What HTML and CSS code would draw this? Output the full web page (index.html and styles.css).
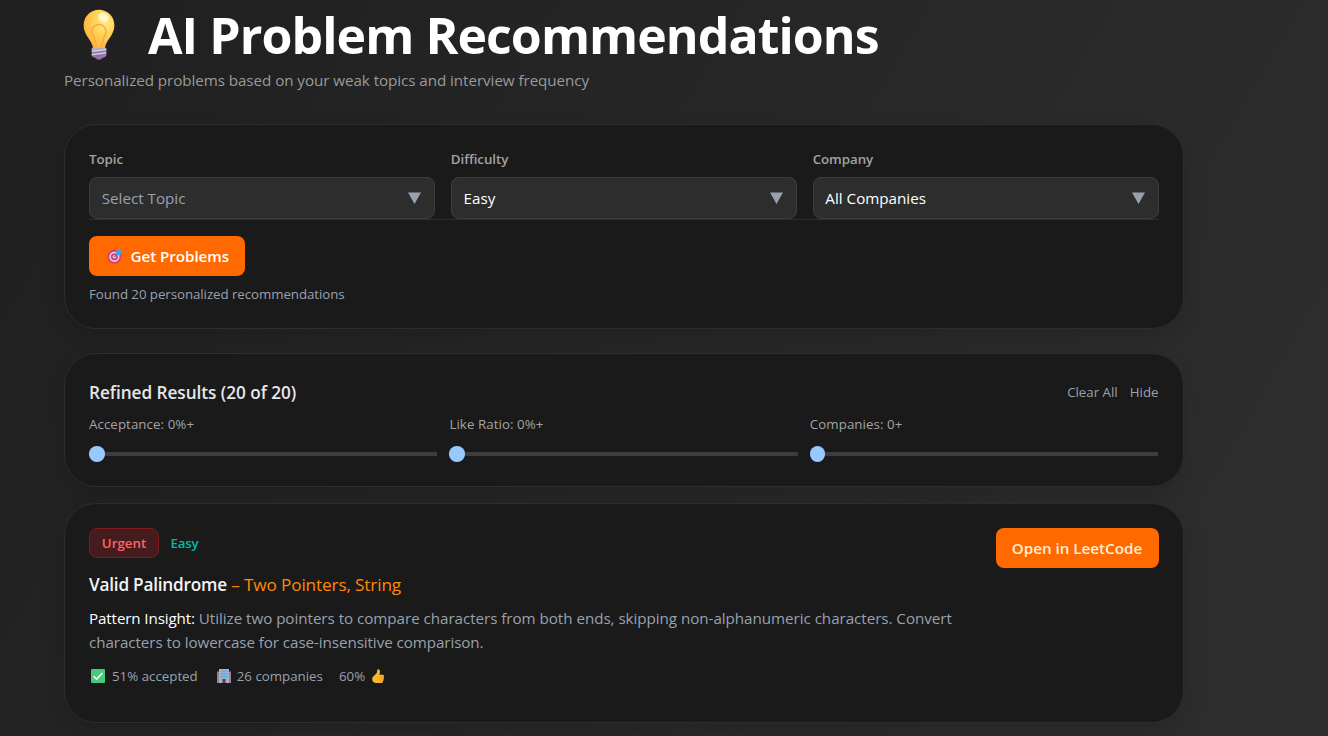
FILE: index.html
```html
<!DOCTYPE html>
<html lang="en">
<head>
<meta charset="utf-8">
<title>AI Problem Recommendations</title>
<link rel="stylesheet" href="styles.css">
</head>
<body>
<main class="page">
  <header class="header">
    <h1 class="title">
      <svg class="bulb" viewBox="0 0 32 51">
        <defs>
          <radialGradient id="glass" cx=".68" cy=".32" r=".75"><stop offset="0" stop-color="#ffec8c"/><stop offset=".45" stop-color="#ffd455"/><stop offset="1" stop-color="#fdb03a"/></radialGradient>
          <linearGradient id="base" x1="0" y1="0" x2="0" y2="1"><stop offset="0" stop-color="#b9aebf"/><stop offset="1" stop-color="#8a63b0"/></linearGradient>
        </defs>
        <path d="M10 39.500C9.500 31 .8 27 .6 16.500A15.400 15.800 0 0 1 31.400 16.500C31.200 27 22.500 31 22 39.500Z" fill="url(#glass)"/>
        <ellipse cx="20.500" cy="8.500" rx="5.500" ry="4.200" fill="#fffbe0" opacity=".85" transform="rotate(35 20.500 8.500)"/>
        <path d="M13.500 38.500C13.200 30 9 27 9 22.500a7 7 0 0 1 14 0C23 27 18.800 30 18.500 38.500" fill="none" stroke="#f9a650" stroke-width="1.500"/>
        <path d="M8.700 39h14.600v7.500c0 1-3 2.500-4.300 2.700-1.500 2-4.500 2-6 0-1.300-.2-4.300-1.700-4.300-2.700Z" fill="url(#base)"/>
        <path d="M8.700 42.200l14.600-1.700M8.700 45.700l14.600-2" stroke="#e2dbe6" stroke-width="1.100"/>
        <path d="M9 44l14-1.800M10 47.400l12.500-1.800" stroke="#806f8e" stroke-width=".8"/>
      </svg>
      <span class="title-text">AI Problem Recommendations</span>
    </h1>
    <p class="subtitle">Personalized problems based on your weak topics and interview frequency</p>
  </header>

  <section class="card search">
    <div class="fields">
      <div class="field"><label class="label">Topic</label><div class="select placeholder"><span>Select Topic</span><svg class="arrow" viewBox="0 0 13 12"><path d="M0 .5h13L6.500 12Z"/></svg></div></div>
      <div class="field"><label class="label">Difficulty</label><div class="select"><span>Easy</span><svg class="arrow" viewBox="0 0 13 12"><path d="M0 .5h13L6.500 12Z"/></svg></div></div>
      <div class="field"><label class="label">Company</label><div class="select"><span>All Companies</span><svg class="arrow" viewBox="0 0 13 12"><path d="M0 .5h13L6.500 12Z"/></svg></div></div>
    </div>
    <button class="button get">
      <svg class="target" viewBox="0 0 16 16"><circle cx="7.400" cy="8.800" r="7" fill="#e0386f"/><circle cx="7.400" cy="8.800" r="5.100" fill="#e3d3e6"/><circle cx="7.400" cy="8.800" r="3.500" fill="#d9386e"/><circle cx="7.400" cy="8.800" r="1.800" fill="#e6c9dc"/><path d="M7.400 8.800L12 4" stroke="#3b6fb0" stroke-width="1.200"/><path d="M8.800 7.200l.3-4.200L13 .3l.5 2.200 2.400.8-3 3.600Z" fill="#3ba4ee"/></svg>
      <span>Get Problems</span>
    </button>
    <p class="found">Found 20 personalized recommendations</p>
  </section>

  <section class="card refine">
    <div class="refine-head">
      <h2 class="heading">Refined Results (20 of 20)</h2>
      <div class="links"><span>Clear All</span><span>Hide</span></div>
    </div>
    <div class="sliders">
      <div class="slider"><span class="slider-label">Acceptance: 0%+</span><div class="track"><i class="thumb"></i></div></div>
      <div class="slider"><span class="slider-label">Like Ratio: 0%+</span><div class="track"><i class="thumb"></i></div></div>
      <div class="slider"><span class="slider-label">Companies: 0+</span><div class="track"><i class="thumb"></i></div></div>
    </div>
  </section>

  <article class="card problem">
    <div class="problem-body">
      <div class="tags"><span class="urgent">Urgent</span><span class="easy">Easy</span></div>
      <h3 class="problem-title"><span class="name">Valid Palindrome</span> <span class="topics">– Two Pointers, String</span></h3>
      <p class="insight"><span class="insight-label">Pattern Insight:</span> Utilize two pointers to compare characters from both ends, skipping non-alphanumeric characters. Convert<br><span class="insight-end">characters to lowercase for case-insensitive comparison.</span></p>
      <div class="stats">
        <span class="stat"><svg class="check" viewBox="0 0 14 14"><rect width="14" height="14" rx="1" fill="#45c97c"/><path d="M2.600 7.200l3 3 5.800-6.200" fill="none" stroke="#fff" stroke-width="1.600"/></svg><span>51% accepted</span></span>
        <span class="stat companies"><svg class="office" viewBox="0 0 14 14"><path d="M0 2.500h3V14H0ZM11 2.500h3V14h-3Z" fill="#8f849c"/><path d="M2 0h10v14H2Z" fill="#b5adbf"/><path d="M3.800 1.600h1.800v1.700H3.800ZM6.200 1.600h1.700v1.700H6.200ZM8.500 1.600h1.800v1.700H8.500ZM3.800 4.200h1.800V6H3.800ZM6.200 4.200h1.700V6H6.200ZM8.500 4.200h1.800V6H8.500ZM3.800 6.900h1.800v1.800H3.800ZM6.200 6.900h1.700v1.800H6.200ZM8.500 6.900h1.800v1.800H8.500Z" fill="#3fb4f2"/><path d="M5.500 10h3v4h-3Z" fill="#4a4258"/></svg><span>26 companies</span></span>
        <span class="stat"><span>60%</span><svg class="thumbup" viewBox="0 0 12 15"><path d="M5.800.3C7.600 0 8.200 1.600 7.800 3.400L7.400 5.800h3.200c1.400 0 1.600 1.500.9 2 .7.600.6 1.700-.1 2.100.5.700.3 1.700-.4 2 .2 1.100-.5 2-1.600 2H5.200C2 14.200.2 12.400.2 10.200c0-3.200 3.400-4 4.600-6.500C5.400 2.500 4.900.8 5.800.3Z" fill="#fbb62e"/><path d="M7.500 8h3.800M7.500 10h3.700M7.700 12h3" stroke="#e18a1c" stroke-width=".6"/></svg></span>
      </div>
    </div>
    <button class="button open">Open in LeetCode</button>
  </article>
</main>
</body>
</html>
```
FILE: styles.css
```css
* { box-sizing: border-box; margin: 0; padding: 0; }
body {
  height: 736px;
  overflow: hidden;
  font-family: "Open Sans", "Noto Sans", sans-serif;
  font-size: 15.2px;
  line-height: 24px;
  color: #fff;
  background: linear-gradient(120deg, #1f1f1f 0%, #2d2d2d 85%);
}
.page { width: 1183.5px; padding-left: 64px; }
.header { margin-bottom: 32px; }
.title { display: flex; align-items: center; height: 68px; padding-top: 1px; font-size: 50px; font-weight: 700; line-height: 66px; white-space: nowrap; }
.title-text { letter-spacing: -.93px; }
.bulb { width: 32px; height: 51px; margin: 0 34px 0 18.5px; }
.title-text { margin-left: -.5px; }
.subtitle { color: #9a9a9a; letter-spacing: -.06px; }
.card {
  border: 1px solid #2d2d2d;
  border-radius: 32px;
  padding: 24px;
  background: #1a1a1a;
  box-shadow: 0 8px 20px rgba(0, 0, 0, .15);
}
.search { margin-bottom: 24px; }
.refine { margin-bottom: 16px; }
.fields { display: grid; grid-template-columns: repeat(3, 1fr); gap: 16px; border-bottom: 1px solid #2d2d2d; margin-bottom: 16px; }
.field { display: flex; flex-direction: column; gap: 8px; }
.label { font-size: 13.3px; font-weight: 600; line-height: 20px; letter-spacing: -.05px; color: #a3a3a3; }
.select { display: flex; align-items: center; justify-content: space-between; height: 42px; padding: 0 13px 0 11.7px; border: 1px solid #3d3d3d; border-radius: 8px; background: #2d2d2d; }
.placeholder { color: #99a1af; }
.arrow { width: 13px; height: 12px; fill: #99a1af; }
.button { display: flex; align-items: center; height: 40px; border: 0; border-radius: 8px; background: #ff6900; color: #fff; font: 600 15.2px "Open Sans", "Noto Sans", sans-serif; white-space: nowrap; }
.get { width: 156px; padding-left: 18px; gap: 7.5px; margin-bottom: 8px; letter-spacing: -.05px; }
.target { width: 16px; height: 16px; }
.found { font-size: 13.3px; line-height: 20px; letter-spacing: -.065px; color: #99a1af; }
.refine-head { display: flex; justify-content: space-between; align-items: center; height: 28px; margin-bottom: 8px; }
.heading { padding-top: 2px; font-size: 17.2px; font-weight: 600; line-height: 28px; letter-spacing: -.04px; color: #e5e7eb; }
.links { display: flex; gap: 12px; font-size: 13.3px; line-height: 20px; color: #99a1af; }
.sliders { display: grid; grid-template-columns: repeat(3, 1fr); gap: 12px; margin-right: .3px; }
.slider { display: flex; flex-direction: column; align-items: flex-start; gap: 12px; }
.slider-label { font-size: 13.3px; line-height: 20px; letter-spacing: .07px; color: #a3a3a3; }
.track { display: flex; align-items: center; width: 100%; height: 16px; border-radius: 2px; background: linear-gradient(#3d3d3d, #3d3d3d) center / 100% 4px no-repeat; }
.thumb { width: 15.5px; height: 15.5px; border-radius: 50%; background: #99c8ff; }
.problem { display: flex; justify-content: space-between; align-items: flex-start; height: 220px; }
.tags { display: flex; align-items: center; gap: 11.5px; height: 30px; margin-bottom: 13px; font-size: 13.3px; font-weight: 600; line-height: 20px; }
.urgent { display: flex; justify-content: center; width: 70px; padding: 4px 0; border: 1px solid #82181a; border-radius: 8px; background: #461b1d; color: #ff6467; }
.easy { color: #00bba7; letter-spacing: -.2px; }
.problem-title { margin-bottom: 7px; font-size: 17.2px; font-weight: 400; line-height: 28px; letter-spacing: -.14px; }
.name { font-weight: 600; letter-spacing: -.22px; color: #f3f4f6; }
.topics { color: #ff8904; }
.insight { margin-bottom: 12px; letter-spacing: -.045px; color: #99a1af; white-space: nowrap; }
.insight-end { letter-spacing: -.08px; }
.insight-label { letter-spacing: -.13px; color: #fff; }
.stats { display: flex; gap: 16px; font-size: 13.3px; line-height: 20px; color: #99a1af; }
.stat { display: flex; align-items: center; gap: 7px; }
.companies { margin-left: 1px; gap: 6px; }
.check, .office { width: 14px; height: 14px; margin-left: 2px; }
.thumbup { width: 12px; height: 15px; }
.open { width: 163px; justify-content: center; color: #ffedd4; }
```
